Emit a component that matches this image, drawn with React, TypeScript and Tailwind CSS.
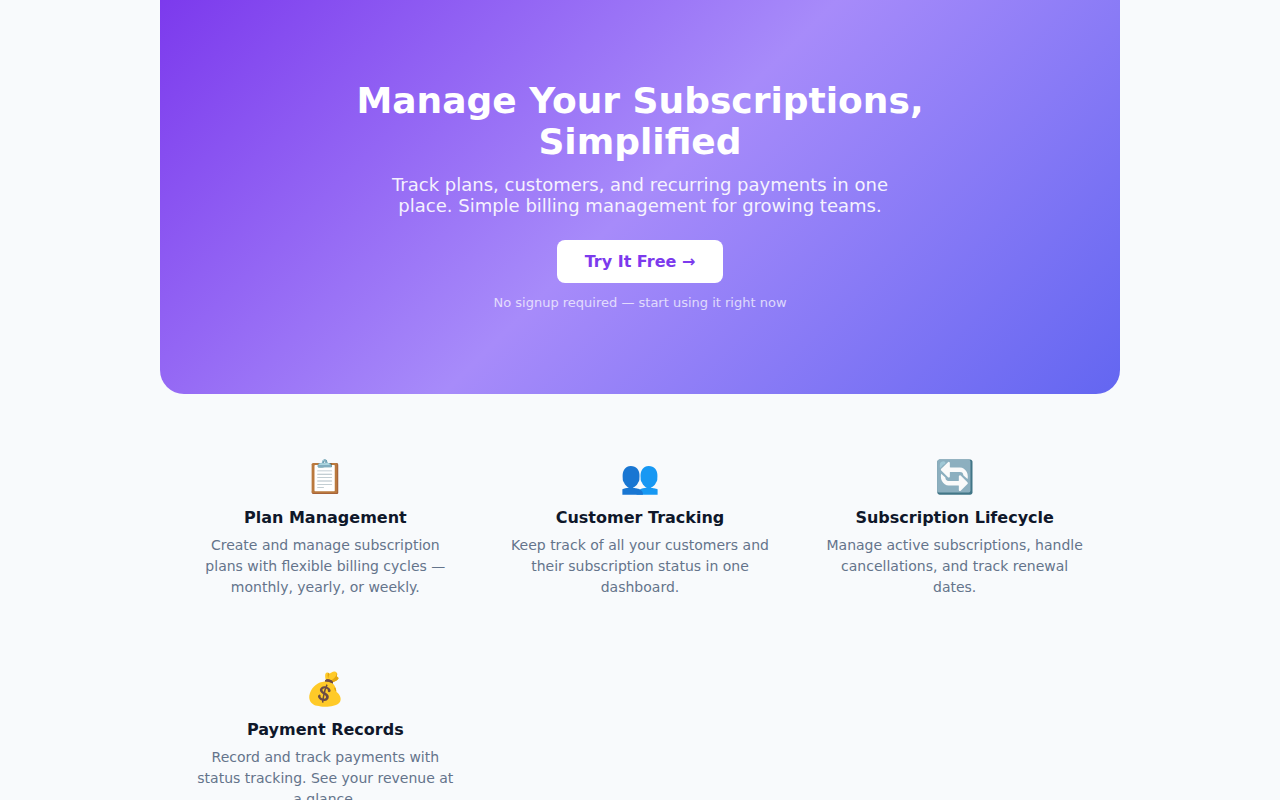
type Feature = {
  icon: string;
  title: string;
  text: string;
};

const features: Feature[] = [
  {
    icon: "📋",
    title: "Plan Management",
    text: "Create and manage subscription plans with flexible billing cycles — monthly, yearly, or weekly.",
  },
  {
    icon: "👥",
    title: "Customer Tracking",
    text: "Keep track of all your customers and their subscription status in one dashboard.",
  },
  {
    icon: "🔄",
    title: "Subscription Lifecycle",
    text: "Manage active subscriptions, handle cancellations, and track renewal dates.",
  },
  {
    icon: "💰",
    title: "Payment Records",
    text: "Record and track payments with status tracking. See your revenue at a glance.",
  },
];

const Hero = () => {
  return (
    <section className="rounded-b-3xl bg-[linear-gradient(135deg,#7c3aed_0%,#a78bfa_50%,#6366f1_100%)] px-6 pt-20 pb-[83px] text-center text-white">
      <div className="mx-auto flex max-w-[600px] flex-col items-center">
        <h1 className="mb-3 text-4xl leading-[41px] font-extrabold">
          Manage Your Subscriptions, Simplified
        </h1>
        <p className="mb-6 max-w-[520px] text-lg leading-[21px] opacity-90">
          Track plans, customers, and recurring payments in one place. Simple
          billing management for growing teams.
        </p>
        <a
          href="#app"
          className="rounded-lg bg-white px-7 py-3 text-base leading-[19px] font-bold text-[#7c3aed]"
        >
          Try It Free →
        </a>
        <p className="mt-3 text-[13px] leading-4 opacity-70">
          No signup required — start using it right now
        </p>
      </div>
    </section>
  );
};

const FeatureCard = ({ icon, title, text }: Feature) => {
  return (
    <div className="px-4 py-6 text-center">
      <div className="mb-3 text-[32px] leading-[38px]">{icon}</div>
      <h3 className="mb-2 text-base leading-[19px] font-bold text-[#0f172a]">
        {title}
      </h3>
      <p className="text-sm leading-[21px] text-[#64748b]">{text}</p>
    </div>
  );
};

export default function App() {
  return (
    <div className="min-h-screen bg-[#f8fafc] font-['DejaVu_Sans',sans-serif]">
      <main className="mx-auto max-w-[960px]">
        <Hero />
        <section className="grid grid-cols-3 gap-6 px-5 py-10">
          {features.map((feature) => (
            <FeatureCard key={feature.title} {...feature} />
          ))}
        </section>
      </main>
    </div>
  );
}
